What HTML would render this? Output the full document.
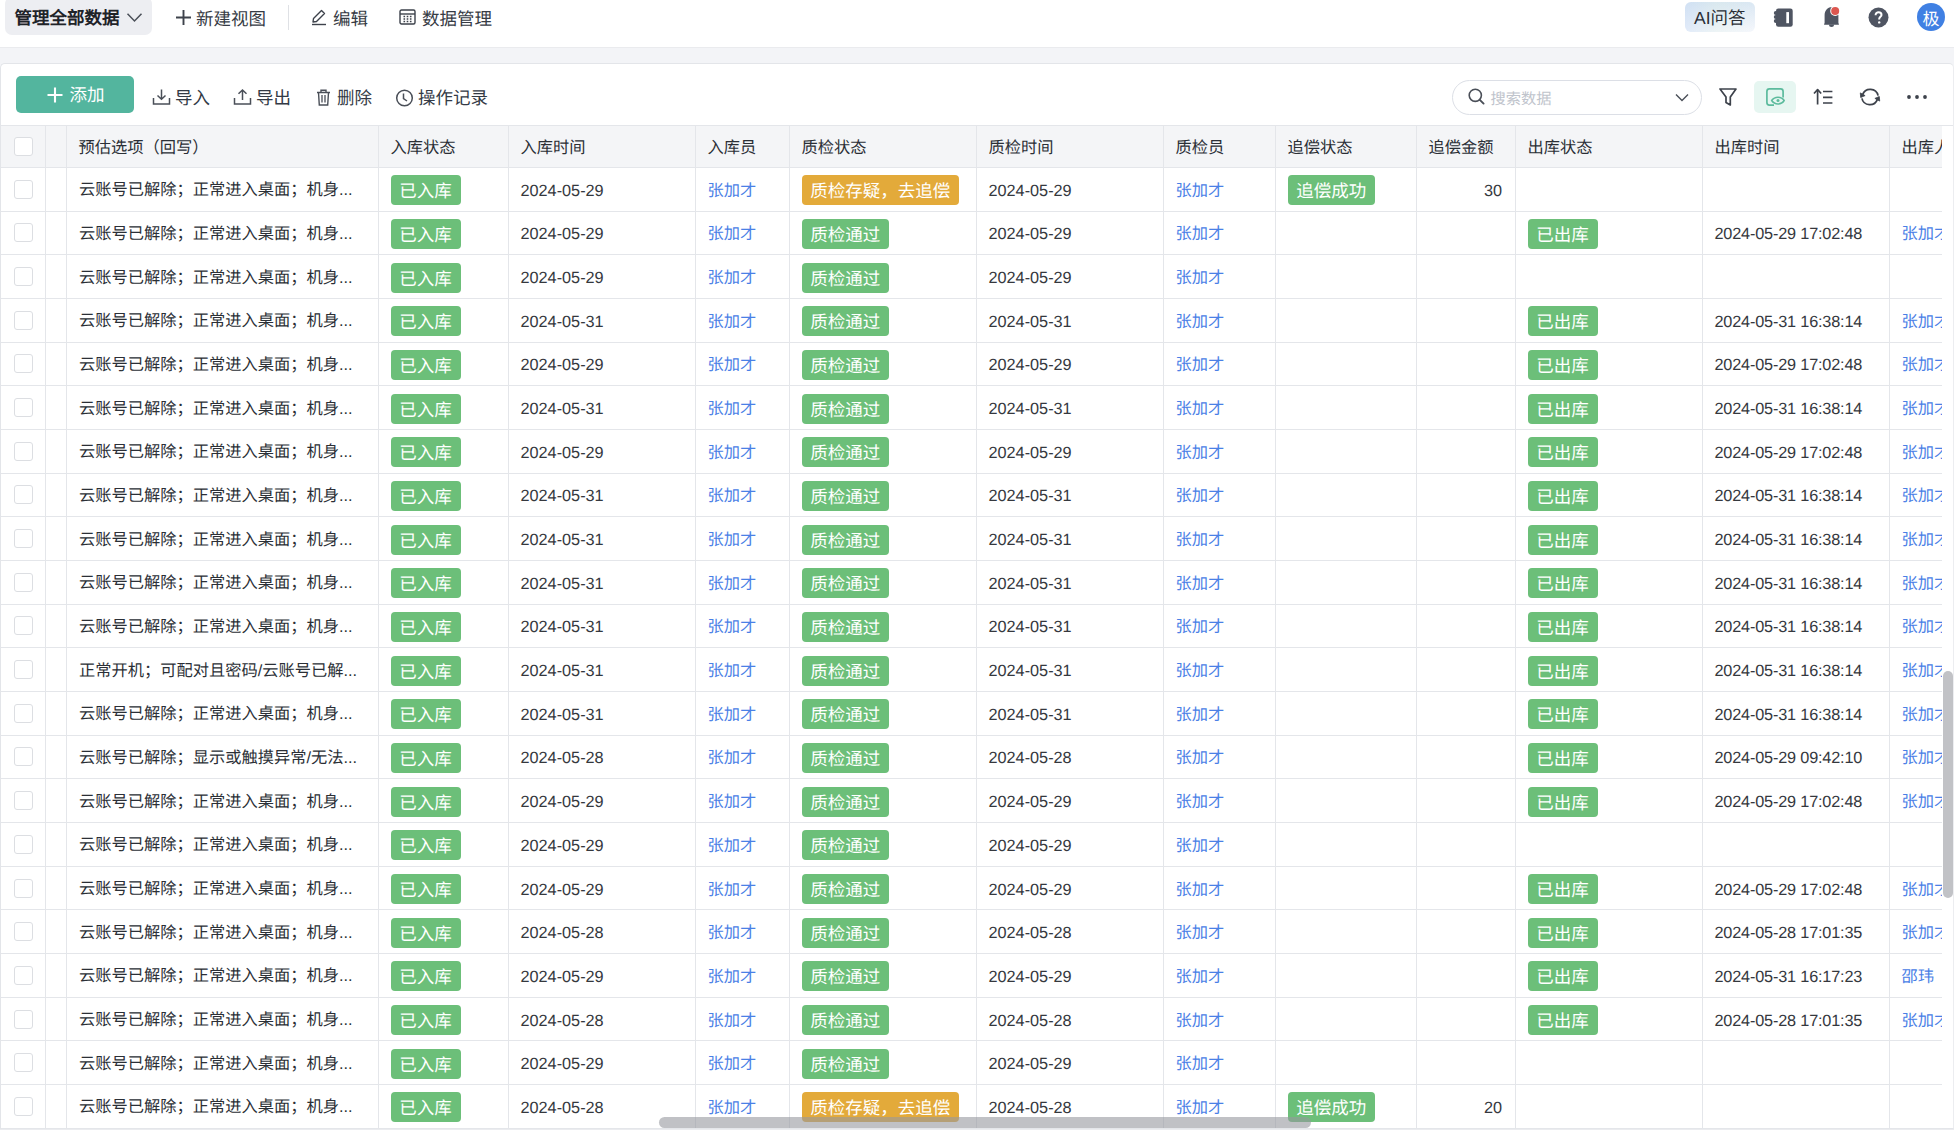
<!DOCTYPE html>
<html lang="zh-CN">
<head>
<meta charset="utf-8">
<title>管理全部数据</title>
<style>
*{box-sizing:border-box;margin:0;padding:0}
html,body{width:1954px;height:1130px;overflow:hidden;background:#fff}
body{position:relative;font-family:"Liberation Sans",sans-serif;color:#333;font-size:16.5px;text-rendering:geometricPrecision}
.abs{position:absolute}
/* top bar */
#topbar{position:absolute;left:0;top:0;width:1954px;height:47px;background:#fff}
#band{position:absolute;left:0;top:47px;width:1954px;height:1083px;background:#f3f4f7;border-top:1px solid #eaebee}
#viewsel{position:absolute;left:5px;top:-3px;width:147px;height:38px;background:#edeef2;border-radius:7px}
#viewsel .tx{position:absolute;left:9.5px;top:4px;line-height:35px;font-weight:bold;font-size:17.5px;color:#1f2329}
.tb{position:absolute;top:1.5px;line-height:35px;font-size:17.5px;color:#363b44}
.ico{position:absolute}
/* card */
#card{position:absolute;left:0;top:63px;width:1954px;height:1066px;background:#fff;border:1px solid #e3e5e9;border-right-color:#ecedf0;border-radius:5px 5px 0 0}
#addbtn{position:absolute;left:16px;top:76px;width:118px;height:37px;background:#53b59e;border-radius:5px;color:#fff;font-size:17.5px;line-height:37px}
.tl{position:absolute;top:81px;line-height:35px;font-size:17.5px;color:#333a45}
#search{position:absolute;left:1452px;top:80px;width:250px;height:35px;border:1px solid #dcdfe6;border-radius:18px;background:#fff}
#search .ph{position:absolute;left:37.5px;top:1.5px;line-height:33px;font-size:15.25px;color:#c0c4cc}
#activebtn{position:absolute;left:1754px;top:81px;width:42px;height:32px;background:#e6f6f1;border-radius:5px}
/* table */
#grid{position:absolute;left:1px;top:125px;width:1941px;height:1004px;overflow:hidden}
#tbl{position:absolute;left:-1px;top:-125px;width:2200px;height:1130px}
.hdr{position:absolute;left:0;top:126px;width:2200px;height:41px;background:#f4f5f7}
.hl{position:absolute;left:0;width:2200px;height:1px;background:#e4e6ea}
.vl{position:absolute;top:125px;width:1px;height:1004px;background:#e4e6ea}
.row{position:absolute;left:0;width:2200px}
.c{position:absolute;top:0;height:100%;padding-left:11.5px;display:flex;align-items:center;white-space:nowrap;overflow:hidden}
.ht{color:#2b2f36;font-size:16.25px;padding-bottom:1px}
.t{color:#2b2f36;font-size:16.25px;padding-left:12px;padding-bottom:2px}
.d{color:#35383e;font-size:16.25px;padding-top:4px}
.dt{letter-spacing:-0.17px}
.num{justify-content:flex-end;padding-right:13px;padding-left:0}
.u{color:#4a80e6;font-size:16.25px;padding-bottom:1px}
.cbc{justify-content:flex-start;padding-left:13px}
.cb{display:block;width:19px;height:19px;border:1px solid #dcdee2;border-radius:3px;background:#fff}
.tag{display:inline-block;height:30px;line-height:30px;padding:1px 8.75px 0;border-radius:4px;color:#fff;font-size:17.5px;margin-top:2px}
.tag.g{background:#6cbf79}
.tag.o{background:#e3aa3a}
#vscroll{position:absolute;left:1943px;top:671px;width:10px;height:227px;background:#c1c2c6;border-radius:5px}
#hscroll{position:absolute;left:659px;top:1117px;width:652px;height:11px;background:rgba(150,152,158,0.6);border-radius:6px}
#bottom{position:absolute;left:0;top:1129px;width:1954px;height:1px;background:#ebecef}
</style>
</head>
<body>
<div id="band"></div>
<div id="topbar">
  <div id="viewsel"><span class="tx">管理全部数据</span>
    <svg class="ico" style="left:121px;top:15px" width="17" height="11" viewBox="0 0 17 11"><path d="M1.5 1.8 L8.5 9 L15.5 1.8" fill="none" stroke="#4a4f58" stroke-width="1.5"/></svg>
  </div>
  <svg class="ico" style="left:175px;top:9px" width="17" height="17" viewBox="0 0 17 17"><path d="M8.5 1 V16 M1 8.5 H16" stroke="#3d424b" stroke-width="1.9"/></svg>
  <span class="tb" style="left:196px">新建视图</span>
  <div class="abs" style="left:288px;top:5px;width:1px;height:25px;background:#dfe1e5"></div>
  <svg class="ico" style="left:310px;top:8px" width="18" height="18" viewBox="0 0 18 18"><path d="M3 14 L3.5 10.5 L11.5 2.5 L14.5 5.5 L6.5 13.5 Z" fill="none" stroke="#3d424b" stroke-width="1.4" stroke-linejoin="round"/><path d="M2 16.5 H16" stroke="#3d424b" stroke-width="1.4"/></svg>
  <span class="tb" style="left:333px">编辑</span>
  <svg class="ico" style="left:399px;top:9px" width="17" height="16" viewBox="0 0 17 16"><rect x="1" y="1" width="15" height="14" rx="1.5" fill="none" stroke="#3d424b" stroke-width="1.4"/><path d="M1 5 H16" stroke="#3d424b" stroke-width="1.4"/><path d="M4.5 7.5h1.6M7.7 7.5h1.6M10.9 7.5h1.6M4.5 10h1.6M7.7 10h1.6M10.9 10h1.6M4.5 12.5h1.6M7.7 12.5h1.6M10.9 12.5h1.6" stroke="#3d424b" stroke-width="1.3"/></svg>
  <span class="tb" style="left:422px">数据管理</span>

  <div class="abs" style="left:1685px;top:2px;width:70px;height:30px;border-radius:6px;background:linear-gradient(90deg,rgba(190,212,245,0.35) 0%,rgba(215,235,225,0.25) 45%,rgba(240,240,250,0) 100%),linear-gradient(180deg,#dae7f3 0%,#e9f0f8 55%,#f5f7fc 100%)"></div>
  <span class="tb" style="left:1694px;top:0.5px;color:#2b2f36">AI问答</span>
  <svg class="ico" style="left:1768px;top:2px" width="30" height="30" viewBox="0 0 30 30"><rect x="8" y="6.4" width="16.7" height="18.3" rx="2.3" fill="#4f5562"/><circle cx="7.8" cy="11.1" r="2" fill="#4f5562"/><circle cx="7.8" cy="15.1" r="2" fill="#4f5562"/><circle cx="7.8" cy="19.1" r="2" fill="#4f5562"/><rect x="18.3" y="10.1" width="2.7" height="11.1" fill="#fff"/></svg>
  <svg class="ico" style="left:1815px;top:2px" width="30" height="30" viewBox="0 0 30 30"><path d="M9 22.8 L9.6 20.8 V13.5 C9.6 8.6 12.6 5 16.5 5 C20.4 5 23.4 8.6 23.4 13.5 V20.8 L24 22.8 Z" fill="#4f5562"/><path d="M14 22.5 H19 A2.5 2.5 0 0 1 14 22.5 Z" fill="#4f5562"/><circle cx="20.2" cy="8.9" r="5" fill="#fff"/><circle cx="20.2" cy="8.9" r="4" fill="#dc5750"/></svg>
  <svg class="ico" style="left:1868px;top:7px" width="21" height="21" viewBox="0 0 21 21"><circle cx="10.5" cy="10.5" r="10" fill="#4f5562"/><path d="M7.6 8.2 C7.6 6.4 8.9 5.3 10.6 5.3 C12.3 5.3 13.5 6.4 13.5 7.9 C13.5 9.6 11.2 10.1 11.2 11.9 V12.6" fill="none" stroke="#fff" stroke-width="2"/><circle cx="11.2" cy="15.4" r="1.2" fill="#fff"/></svg>
  <div class="abs" style="left:1917px;top:3px;width:28px;height:28px;border-radius:50%;background:#4080e3;color:#fff;font-size:17px;line-height:28px;text-align:center"><span style="position:relative;top:2.5px">极</span></div>
</div>

<div id="card"></div>
<div id="addbtn"><svg class="ico" style="left:31px;top:11px" width="16" height="16" viewBox="0 0 16 16"><path d="M8 0.5 V15.5 M0.5 8 H15.5" stroke="#fff" stroke-width="2.1"/></svg><span class="abs" style="left:53.5px;top:1px;font-size:17.5px">添加</span></div>

<svg class="ico" style="left:152px;top:88px" width="19" height="18" viewBox="0 0 19 18"><path d="M9.5 1.5 V11 M5.5 7.5 L9.5 11.2 L13.5 7.5" fill="none" stroke="#4a4f58" stroke-width="1.5"/><path d="M1.5 10 V16 H17.5 V10" fill="none" stroke="#4a4f58" stroke-width="1.5"/></svg>
<span class="tl" style="left:175px">导入</span>
<svg class="ico" style="left:233px;top:88px" width="19" height="18" viewBox="0 0 19 18"><path d="M9.5 12 V2 M5.5 5.8 L9.5 2 L13.5 5.8" fill="none" stroke="#4a4f58" stroke-width="1.5"/><path d="M1.5 10 V16 H17.5 V10" fill="none" stroke="#4a4f58" stroke-width="1.5"/></svg>
<span class="tl" style="left:256px">导出</span>
<svg class="ico" style="left:316px;top:89px" width="15" height="17" viewBox="0 0 15 17"><path d="M1 3.5 H14 M5 3.5 V1.2 H10 V3.5" fill="none" stroke="#4a4f58" stroke-width="1.4"/><path d="M2.5 3.5 L3.3 16 H11.7 L12.5 3.5" fill="none" stroke="#4a4f58" stroke-width="1.4"/><path d="M6 6v7.5M9 6v7.5" stroke="#4a4f58" stroke-width="1.3"/></svg>
<span class="tl" style="left:337px">删除</span>
<svg class="ico" style="left:395px;top:89px" width="19" height="18" viewBox="0 0 19 18"><circle cx="9.5" cy="9" r="7.8" fill="none" stroke="#4a4f58" stroke-width="1.5"/><path d="M8.5 4.5 V9.5 L12 12" fill="none" stroke="#4a4f58" stroke-width="1.5"/></svg>
<span class="tl" style="left:418px">操作记录</span>

<div id="search"><svg class="ico" style="left:15px;top:7px" width="18" height="18" viewBox="0 0 18 18"><circle cx="7.3" cy="7.3" r="6.1" fill="none" stroke="#4a4f58" stroke-width="1.6"/><path d="M11.8 11.8 L15.6 15.6" stroke="#4a4f58" stroke-width="1.9" stroke-linecap="round"/></svg><span class="ph">搜索数据</span>
<svg class="ico" style="left:222px;top:12px" width="14" height="9" viewBox="0 0 14 9"><path d="M1 1.5 L7 7.5 L13 1.5" fill="none" stroke="#4a4f58" stroke-width="1.4"/></svg></div>
<svg class="ico" style="left:1718px;top:87px" width="20" height="20" viewBox="0 0 20 20"><path d="M2 2 H18 L12.3 10 V18 L8 15.5 V10 Z" fill="none" stroke="#3d424b" stroke-width="1.7" stroke-linejoin="round"/></svg>
<div id="activebtn"></div><svg class="ico" style="left:1760px;top:82px" width="30" height="30" viewBox="0 0 30 30"><path d="M14 23.1 H9.4 C8 23.1 6.9 22 6.9 20.6 V9.4 C6.9 8 8 6.9 9.4 6.9 H20.6 C22 6.9 23.1 8 23.1 9.4 V15.5" fill="none" stroke="#5cbb9d" stroke-width="1.7"/><path d="M11.6 18.5 C13.5 15.8 15.8 15.2 18 15.2 C20.2 15.2 22.5 15.8 24.2 18.5 C22.5 21.2 20.2 21.9 18 21.9 C15.8 21.9 13.5 21.2 11.6 18.5 Z" fill="#e6f6f1" stroke="#5cbb9d" stroke-width="1.5" stroke-linejoin="round"/><circle cx="18" cy="18.6" r="1.5" fill="#5cbb9d"/></svg>
<svg class="ico" style="left:1810px;top:82px" width="26" height="30" viewBox="0 0 26 30"><path d="M7.6 22.5 V8.2" stroke="#3d424b" stroke-width="1.7"/><path d="M4 11.5 L7.6 7.6 L11.2 11.5" fill="none" stroke="#3d424b" stroke-width="1.7" stroke-linejoin="round"/><path d="M13 9.5 H22.4 M13 15.4 H22.4 M13 21 H22.4" stroke="#3d424b" stroke-width="1.7"/></svg>
<svg class="ico" style="left:1855px;top:82px" width="30" height="30" viewBox="0 0 30 30"><path d="M23.1 13.6 A8.1 8.1 0 0 0 7.6 12.6" fill="none" stroke="#3d424b" stroke-width="1.7"/><path d="M5.3 10.9 L10.1 13.6 L5.7 15.5 Z" fill="#3d424b" stroke="#3d424b" stroke-width="0.8" stroke-linejoin="round"/><path d="M6.9 16.4 A8.1 8.1 0 0 0 22.4 17.4" fill="none" stroke="#3d424b" stroke-width="1.7"/><path d="M24.7 19.1 L19.9 16.4 L24.3 14.5 Z" fill="#3d424b" stroke="#3d424b" stroke-width="0.8" stroke-linejoin="round"/></svg>
<svg class="ico" style="left:1906px;top:93px" width="22" height="8" viewBox="0 0 22 8"><circle cx="3" cy="4" r="1.9" fill="#3d424b"/><circle cx="11" cy="4" r="1.9" fill="#3d424b"/><circle cx="19" cy="4" r="1.9" fill="#3d424b"/></svg>

<div class="hl" style="top:125px;left:1px;width:1952px"></div>
<div id="grid"><div id="tbl">
<div class="hdr"><div class="c cbc" style="left:1px;width:44px"><span class="cb"></span></div><div class="c ht" style="left:46px;width:20px"></div><div class="c ht" style="left:67px;width:311px">预估选项（回写）</div><div class="c ht" style="left:379px;width:129px">入库状态</div><div class="c ht" style="left:509px;width:186px">入库时间</div><div class="c ht" style="left:696px;width:93px">入库员</div><div class="c ht" style="left:790px;width:186px">质检状态</div><div class="c ht" style="left:977px;width:186px">质检时间</div><div class="c ht" style="left:1164px;width:111px">质检员</div><div class="c ht" style="left:1276px;width:140px">追偿状态</div><div class="c ht" style="left:1417px;width:98px">追偿金额</div><div class="c ht" style="left:1516px;width:186px">出库状态</div><div class="c ht" style="left:1703px;width:186px">出库时间</div><div class="c ht" style="left:1890px;width:210px">出库人</div></div>
<div class="hl" style="top:167px"></div>
<div class="row" style="top:168.000px;height:42.667px"><div class="c cbc" style="left:1px;width:44px"><span class="cb"></span></div><div class="c t" style="left:67px;width:311px">云账号已解除；正常进入桌面；机身...</div><div class="c " style="left:379px;width:129px"><span class="tag g">已入库</span></div><div class="c d" style="left:509px;width:186px">2024-05-29</div><div class="c u" style="left:696px;width:93px">张加才</div><div class="c " style="left:790px;width:186px"><span class="tag o">质检存疑，去追偿</span></div><div class="c d" style="left:977px;width:186px">2024-05-29</div><div class="c u" style="left:1164px;width:111px">张加才</div><div class="c " style="left:1276px;width:140px"><span class="tag g">追偿成功</span></div><div class="c d num" style="left:1417px;width:98px">30</div></div>
<div class="hl" style="top:211px"></div>
<div class="row" style="top:211.667px;height:42.667px"><div class="c cbc" style="left:1px;width:44px"><span class="cb"></span></div><div class="c t" style="left:67px;width:311px">云账号已解除；正常进入桌面；机身...</div><div class="c " style="left:379px;width:129px"><span class="tag g">已入库</span></div><div class="c d" style="left:509px;width:186px">2024-05-29</div><div class="c u" style="left:696px;width:93px">张加才</div><div class="c " style="left:790px;width:186px"><span class="tag g">质检通过</span></div><div class="c d" style="left:977px;width:186px">2024-05-29</div><div class="c u" style="left:1164px;width:111px">张加才</div><div class="c " style="left:1516px;width:186px"><span class="tag g">已出库</span></div><div class="c d dt" style="left:1703px;width:186px">2024-05-29 17:02:48</div><div class="c u" style="left:1890px;width:210px">张加才</div></div>
<div class="hl" style="top:254px"></div>
<div class="row" style="top:255.334px;height:42.667px"><div class="c cbc" style="left:1px;width:44px"><span class="cb"></span></div><div class="c t" style="left:67px;width:311px">云账号已解除；正常进入桌面；机身...</div><div class="c " style="left:379px;width:129px"><span class="tag g">已入库</span></div><div class="c d" style="left:509px;width:186px">2024-05-29</div><div class="c u" style="left:696px;width:93px">张加才</div><div class="c " style="left:790px;width:186px"><span class="tag g">质检通过</span></div><div class="c d" style="left:977px;width:186px">2024-05-29</div><div class="c u" style="left:1164px;width:111px">张加才</div></div>
<div class="hl" style="top:298px"></div>
<div class="row" style="top:299.001px;height:42.667px"><div class="c cbc" style="left:1px;width:44px"><span class="cb"></span></div><div class="c t" style="left:67px;width:311px">云账号已解除；正常进入桌面；机身...</div><div class="c " style="left:379px;width:129px"><span class="tag g">已入库</span></div><div class="c d" style="left:509px;width:186px">2024-05-31</div><div class="c u" style="left:696px;width:93px">张加才</div><div class="c " style="left:790px;width:186px"><span class="tag g">质检通过</span></div><div class="c d" style="left:977px;width:186px">2024-05-31</div><div class="c u" style="left:1164px;width:111px">张加才</div><div class="c " style="left:1516px;width:186px"><span class="tag g">已出库</span></div><div class="c d dt" style="left:1703px;width:186px">2024-05-31 16:38:14</div><div class="c u" style="left:1890px;width:210px">张加才</div></div>
<div class="hl" style="top:342px"></div>
<div class="row" style="top:342.668px;height:42.667px"><div class="c cbc" style="left:1px;width:44px"><span class="cb"></span></div><div class="c t" style="left:67px;width:311px">云账号已解除；正常进入桌面；机身...</div><div class="c " style="left:379px;width:129px"><span class="tag g">已入库</span></div><div class="c d" style="left:509px;width:186px">2024-05-29</div><div class="c u" style="left:696px;width:93px">张加才</div><div class="c " style="left:790px;width:186px"><span class="tag g">质检通过</span></div><div class="c d" style="left:977px;width:186px">2024-05-29</div><div class="c u" style="left:1164px;width:111px">张加才</div><div class="c " style="left:1516px;width:186px"><span class="tag g">已出库</span></div><div class="c d dt" style="left:1703px;width:186px">2024-05-29 17:02:48</div><div class="c u" style="left:1890px;width:210px">张加才</div></div>
<div class="hl" style="top:385px"></div>
<div class="row" style="top:386.335px;height:42.667px"><div class="c cbc" style="left:1px;width:44px"><span class="cb"></span></div><div class="c t" style="left:67px;width:311px">云账号已解除；正常进入桌面；机身...</div><div class="c " style="left:379px;width:129px"><span class="tag g">已入库</span></div><div class="c d" style="left:509px;width:186px">2024-05-31</div><div class="c u" style="left:696px;width:93px">张加才</div><div class="c " style="left:790px;width:186px"><span class="tag g">质检通过</span></div><div class="c d" style="left:977px;width:186px">2024-05-31</div><div class="c u" style="left:1164px;width:111px">张加才</div><div class="c " style="left:1516px;width:186px"><span class="tag g">已出库</span></div><div class="c d dt" style="left:1703px;width:186px">2024-05-31 16:38:14</div><div class="c u" style="left:1890px;width:210px">张加才</div></div>
<div class="hl" style="top:429px"></div>
<div class="row" style="top:430.002px;height:42.667px"><div class="c cbc" style="left:1px;width:44px"><span class="cb"></span></div><div class="c t" style="left:67px;width:311px">云账号已解除；正常进入桌面；机身...</div><div class="c " style="left:379px;width:129px"><span class="tag g">已入库</span></div><div class="c d" style="left:509px;width:186px">2024-05-29</div><div class="c u" style="left:696px;width:93px">张加才</div><div class="c " style="left:790px;width:186px"><span class="tag g">质检通过</span></div><div class="c d" style="left:977px;width:186px">2024-05-29</div><div class="c u" style="left:1164px;width:111px">张加才</div><div class="c " style="left:1516px;width:186px"><span class="tag g">已出库</span></div><div class="c d dt" style="left:1703px;width:186px">2024-05-29 17:02:48</div><div class="c u" style="left:1890px;width:210px">张加才</div></div>
<div class="hl" style="top:473px"></div>
<div class="row" style="top:473.669px;height:42.667px"><div class="c cbc" style="left:1px;width:44px"><span class="cb"></span></div><div class="c t" style="left:67px;width:311px">云账号已解除；正常进入桌面；机身...</div><div class="c " style="left:379px;width:129px"><span class="tag g">已入库</span></div><div class="c d" style="left:509px;width:186px">2024-05-31</div><div class="c u" style="left:696px;width:93px">张加才</div><div class="c " style="left:790px;width:186px"><span class="tag g">质检通过</span></div><div class="c d" style="left:977px;width:186px">2024-05-31</div><div class="c u" style="left:1164px;width:111px">张加才</div><div class="c " style="left:1516px;width:186px"><span class="tag g">已出库</span></div><div class="c d dt" style="left:1703px;width:186px">2024-05-31 16:38:14</div><div class="c u" style="left:1890px;width:210px">张加才</div></div>
<div class="hl" style="top:516px"></div>
<div class="row" style="top:517.336px;height:42.667px"><div class="c cbc" style="left:1px;width:44px"><span class="cb"></span></div><div class="c t" style="left:67px;width:311px">云账号已解除；正常进入桌面；机身...</div><div class="c " style="left:379px;width:129px"><span class="tag g">已入库</span></div><div class="c d" style="left:509px;width:186px">2024-05-31</div><div class="c u" style="left:696px;width:93px">张加才</div><div class="c " style="left:790px;width:186px"><span class="tag g">质检通过</span></div><div class="c d" style="left:977px;width:186px">2024-05-31</div><div class="c u" style="left:1164px;width:111px">张加才</div><div class="c " style="left:1516px;width:186px"><span class="tag g">已出库</span></div><div class="c d dt" style="left:1703px;width:186px">2024-05-31 16:38:14</div><div class="c u" style="left:1890px;width:210px">张加才</div></div>
<div class="hl" style="top:560px"></div>
<div class="row" style="top:561.003px;height:42.667px"><div class="c cbc" style="left:1px;width:44px"><span class="cb"></span></div><div class="c t" style="left:67px;width:311px">云账号已解除；正常进入桌面；机身...</div><div class="c " style="left:379px;width:129px"><span class="tag g">已入库</span></div><div class="c d" style="left:509px;width:186px">2024-05-31</div><div class="c u" style="left:696px;width:93px">张加才</div><div class="c " style="left:790px;width:186px"><span class="tag g">质检通过</span></div><div class="c d" style="left:977px;width:186px">2024-05-31</div><div class="c u" style="left:1164px;width:111px">张加才</div><div class="c " style="left:1516px;width:186px"><span class="tag g">已出库</span></div><div class="c d dt" style="left:1703px;width:186px">2024-05-31 16:38:14</div><div class="c u" style="left:1890px;width:210px">张加才</div></div>
<div class="hl" style="top:604px"></div>
<div class="row" style="top:604.670px;height:42.667px"><div class="c cbc" style="left:1px;width:44px"><span class="cb"></span></div><div class="c t" style="left:67px;width:311px">云账号已解除；正常进入桌面；机身...</div><div class="c " style="left:379px;width:129px"><span class="tag g">已入库</span></div><div class="c d" style="left:509px;width:186px">2024-05-31</div><div class="c u" style="left:696px;width:93px">张加才</div><div class="c " style="left:790px;width:186px"><span class="tag g">质检通过</span></div><div class="c d" style="left:977px;width:186px">2024-05-31</div><div class="c u" style="left:1164px;width:111px">张加才</div><div class="c " style="left:1516px;width:186px"><span class="tag g">已出库</span></div><div class="c d dt" style="left:1703px;width:186px">2024-05-31 16:38:14</div><div class="c u" style="left:1890px;width:210px">张加才</div></div>
<div class="hl" style="top:647px"></div>
<div class="row" style="top:648.337px;height:42.667px"><div class="c cbc" style="left:1px;width:44px"><span class="cb"></span></div><div class="c t" style="left:67px;width:311px">正常开机；可配对且密码/云账号已解...</div><div class="c " style="left:379px;width:129px"><span class="tag g">已入库</span></div><div class="c d" style="left:509px;width:186px">2024-05-31</div><div class="c u" style="left:696px;width:93px">张加才</div><div class="c " style="left:790px;width:186px"><span class="tag g">质检通过</span></div><div class="c d" style="left:977px;width:186px">2024-05-31</div><div class="c u" style="left:1164px;width:111px">张加才</div><div class="c " style="left:1516px;width:186px"><span class="tag g">已出库</span></div><div class="c d dt" style="left:1703px;width:186px">2024-05-31 16:38:14</div><div class="c u" style="left:1890px;width:210px">张加才</div></div>
<div class="hl" style="top:691px"></div>
<div class="row" style="top:692.004px;height:42.667px"><div class="c cbc" style="left:1px;width:44px"><span class="cb"></span></div><div class="c t" style="left:67px;width:311px">云账号已解除；正常进入桌面；机身...</div><div class="c " style="left:379px;width:129px"><span class="tag g">已入库</span></div><div class="c d" style="left:509px;width:186px">2024-05-31</div><div class="c u" style="left:696px;width:93px">张加才</div><div class="c " style="left:790px;width:186px"><span class="tag g">质检通过</span></div><div class="c d" style="left:977px;width:186px">2024-05-31</div><div class="c u" style="left:1164px;width:111px">张加才</div><div class="c " style="left:1516px;width:186px"><span class="tag g">已出库</span></div><div class="c d dt" style="left:1703px;width:186px">2024-05-31 16:38:14</div><div class="c u" style="left:1890px;width:210px">张加才</div></div>
<div class="hl" style="top:735px"></div>
<div class="row" style="top:735.671px;height:42.667px"><div class="c cbc" style="left:1px;width:44px"><span class="cb"></span></div><div class="c t" style="left:67px;width:311px">云账号已解除；显示或触摸异常/无法...</div><div class="c " style="left:379px;width:129px"><span class="tag g">已入库</span></div><div class="c d" style="left:509px;width:186px">2024-05-28</div><div class="c u" style="left:696px;width:93px">张加才</div><div class="c " style="left:790px;width:186px"><span class="tag g">质检通过</span></div><div class="c d" style="left:977px;width:186px">2024-05-28</div><div class="c u" style="left:1164px;width:111px">张加才</div><div class="c " style="left:1516px;width:186px"><span class="tag g">已出库</span></div><div class="c d dt" style="left:1703px;width:186px">2024-05-29 09:42:10</div><div class="c u" style="left:1890px;width:210px">张加才</div></div>
<div class="hl" style="top:778px"></div>
<div class="row" style="top:779.338px;height:42.667px"><div class="c cbc" style="left:1px;width:44px"><span class="cb"></span></div><div class="c t" style="left:67px;width:311px">云账号已解除；正常进入桌面；机身...</div><div class="c " style="left:379px;width:129px"><span class="tag g">已入库</span></div><div class="c d" style="left:509px;width:186px">2024-05-29</div><div class="c u" style="left:696px;width:93px">张加才</div><div class="c " style="left:790px;width:186px"><span class="tag g">质检通过</span></div><div class="c d" style="left:977px;width:186px">2024-05-29</div><div class="c u" style="left:1164px;width:111px">张加才</div><div class="c " style="left:1516px;width:186px"><span class="tag g">已出库</span></div><div class="c d dt" style="left:1703px;width:186px">2024-05-29 17:02:48</div><div class="c u" style="left:1890px;width:210px">张加才</div></div>
<div class="hl" style="top:822px"></div>
<div class="row" style="top:823.005px;height:42.667px"><div class="c cbc" style="left:1px;width:44px"><span class="cb"></span></div><div class="c t" style="left:67px;width:311px">云账号已解除；正常进入桌面；机身...</div><div class="c " style="left:379px;width:129px"><span class="tag g">已入库</span></div><div class="c d" style="left:509px;width:186px">2024-05-29</div><div class="c u" style="left:696px;width:93px">张加才</div><div class="c " style="left:790px;width:186px"><span class="tag g">质检通过</span></div><div class="c d" style="left:977px;width:186px">2024-05-29</div><div class="c u" style="left:1164px;width:111px">张加才</div></div>
<div class="hl" style="top:866px"></div>
<div class="row" style="top:866.672px;height:42.667px"><div class="c cbc" style="left:1px;width:44px"><span class="cb"></span></div><div class="c t" style="left:67px;width:311px">云账号已解除；正常进入桌面；机身...</div><div class="c " style="left:379px;width:129px"><span class="tag g">已入库</span></div><div class="c d" style="left:509px;width:186px">2024-05-29</div><div class="c u" style="left:696px;width:93px">张加才</div><div class="c " style="left:790px;width:186px"><span class="tag g">质检通过</span></div><div class="c d" style="left:977px;width:186px">2024-05-29</div><div class="c u" style="left:1164px;width:111px">张加才</div><div class="c " style="left:1516px;width:186px"><span class="tag g">已出库</span></div><div class="c d dt" style="left:1703px;width:186px">2024-05-29 17:02:48</div><div class="c u" style="left:1890px;width:210px">张加才</div></div>
<div class="hl" style="top:909px"></div>
<div class="row" style="top:910.339px;height:42.667px"><div class="c cbc" style="left:1px;width:44px"><span class="cb"></span></div><div class="c t" style="left:67px;width:311px">云账号已解除；正常进入桌面；机身...</div><div class="c " style="left:379px;width:129px"><span class="tag g">已入库</span></div><div class="c d" style="left:509px;width:186px">2024-05-28</div><div class="c u" style="left:696px;width:93px">张加才</div><div class="c " style="left:790px;width:186px"><span class="tag g">质检通过</span></div><div class="c d" style="left:977px;width:186px">2024-05-28</div><div class="c u" style="left:1164px;width:111px">张加才</div><div class="c " style="left:1516px;width:186px"><span class="tag g">已出库</span></div><div class="c d dt" style="left:1703px;width:186px">2024-05-28 17:01:35</div><div class="c u" style="left:1890px;width:210px">张加才</div></div>
<div class="hl" style="top:953px"></div>
<div class="row" style="top:954.006px;height:42.667px"><div class="c cbc" style="left:1px;width:44px"><span class="cb"></span></div><div class="c t" style="left:67px;width:311px">云账号已解除；正常进入桌面；机身...</div><div class="c " style="left:379px;width:129px"><span class="tag g">已入库</span></div><div class="c d" style="left:509px;width:186px">2024-05-29</div><div class="c u" style="left:696px;width:93px">张加才</div><div class="c " style="left:790px;width:186px"><span class="tag g">质检通过</span></div><div class="c d" style="left:977px;width:186px">2024-05-29</div><div class="c u" style="left:1164px;width:111px">张加才</div><div class="c " style="left:1516px;width:186px"><span class="tag g">已出库</span></div><div class="c d dt" style="left:1703px;width:186px">2024-05-31 16:17:23</div><div class="c u" style="left:1890px;width:210px">邵玮</div></div>
<div class="hl" style="top:997px"></div>
<div class="row" style="top:997.673px;height:42.667px"><div class="c cbc" style="left:1px;width:44px"><span class="cb"></span></div><div class="c t" style="left:67px;width:311px">云账号已解除；正常进入桌面；机身...</div><div class="c " style="left:379px;width:129px"><span class="tag g">已入库</span></div><div class="c d" style="left:509px;width:186px">2024-05-28</div><div class="c u" style="left:696px;width:93px">张加才</div><div class="c " style="left:790px;width:186px"><span class="tag g">质检通过</span></div><div class="c d" style="left:977px;width:186px">2024-05-28</div><div class="c u" style="left:1164px;width:111px">张加才</div><div class="c " style="left:1516px;width:186px"><span class="tag g">已出库</span></div><div class="c d dt" style="left:1703px;width:186px">2024-05-28 17:01:35</div><div class="c u" style="left:1890px;width:210px">张加才</div></div>
<div class="hl" style="top:1040px"></div>
<div class="row" style="top:1041.340px;height:42.667px"><div class="c cbc" style="left:1px;width:44px"><span class="cb"></span></div><div class="c t" style="left:67px;width:311px">云账号已解除；正常进入桌面；机身...</div><div class="c " style="left:379px;width:129px"><span class="tag g">已入库</span></div><div class="c d" style="left:509px;width:186px">2024-05-29</div><div class="c u" style="left:696px;width:93px">张加才</div><div class="c " style="left:790px;width:186px"><span class="tag g">质检通过</span></div><div class="c d" style="left:977px;width:186px">2024-05-29</div><div class="c u" style="left:1164px;width:111px">张加才</div></div>
<div class="hl" style="top:1084px"></div>
<div class="row" style="top:1085.007px;height:42.667px"><div class="c cbc" style="left:1px;width:44px"><span class="cb"></span></div><div class="c t" style="left:67px;width:311px">云账号已解除；正常进入桌面；机身...</div><div class="c " style="left:379px;width:129px"><span class="tag g">已入库</span></div><div class="c d" style="left:509px;width:186px">2024-05-28</div><div class="c u" style="left:696px;width:93px">张加才</div><div class="c " style="left:790px;width:186px"><span class="tag o">质检存疑，去追偿</span></div><div class="c d" style="left:977px;width:186px">2024-05-28</div><div class="c u" style="left:1164px;width:111px">张加才</div><div class="c " style="left:1276px;width:140px"><span class="tag g">追偿成功</span></div><div class="c d num" style="left:1417px;width:98px">20</div></div>
<div class="hl" style="top:1128px"></div>
<div class="vl" style="left:45px"></div><div class="vl" style="left:66px"></div><div class="vl" style="left:378px"></div><div class="vl" style="left:508px"></div><div class="vl" style="left:695px"></div><div class="vl" style="left:789px"></div><div class="vl" style="left:976px"></div><div class="vl" style="left:1163px"></div><div class="vl" style="left:1275px"></div><div class="vl" style="left:1416px"></div><div class="vl" style="left:1515px"></div><div class="vl" style="left:1702px"></div><div class="vl" style="left:1889px"></div>
</div></div>
<div id="vscroll"></div>
<div id="hscroll"></div>
<div id="bottom"></div>
</body>
</html>
